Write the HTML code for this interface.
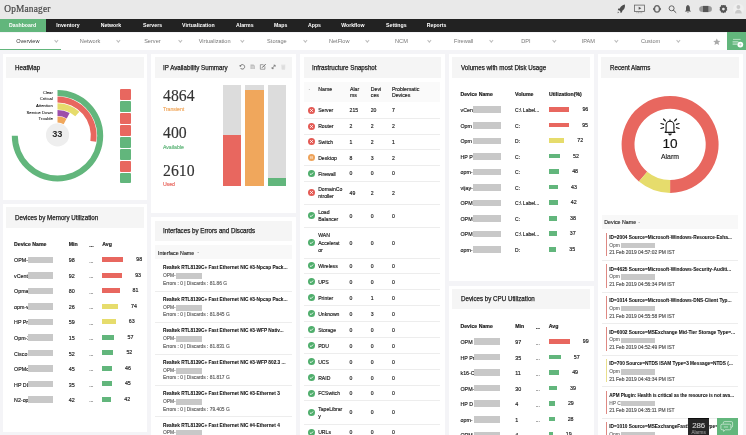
<!DOCTYPE html><html><head><meta charset="utf-8"><style>
*{margin:0;padding:0;box-sizing:border-box}
html,body{-webkit-font-smoothing:antialiased;width:746px;height:435px;overflow:hidden;background:#f4f4f7;font-family:"Liberation Sans",sans-serif;color:#222}
.a{position:absolute;white-space:nowrap}
#top{position:absolute;left:0;top:0;width:746px;height:18.7px;background:#e9e9e9}
#nav{position:absolute;left:0;top:18.7px;width:746px;height:13.8px;background:#222}
#sub{position:absolute;left:0;top:32.5px;width:746px;height:17.8px;background:#fff}
.nv{position:absolute;top:18.7px;height:13.8px;line-height:13.8px;color:#fff;font-weight:bold;font-size:5.2px}
.sn{position:absolute;top:32.5px;height:17px;line-height:17px;color:#777;font-size:5.6px;text-align:center;width:62.27px}
.chev{position:absolute;top:38.9px;width:2.7px;height:2.7px;border-right:0.6px solid #bdbdbd;border-bottom:0.6px solid #bdbdbd;transform:rotate(45deg)}
.p{position:absolute;background:#fff;width:144.8px;overflow:hidden}
.hb{position:absolute;left:3.5px;right:3.5px;top:3.6px;height:20.4px;background:#f5f5f5}
.ht{position:absolute;left:8.5px;top:0.4px;line-height:20.3px;font-size:6.5px;font-weight:normal;-webkit-text-stroke:0.25px #222;color:#222;white-space:nowrap;transform:scaleX(0.955);transform-origin:0 50%}
.t{position:absolute;white-space:nowrap;line-height:8px;height:8px;-webkit-text-stroke:0.16px currentColor}
.gb{position:absolute;background:#c8c8c8}
</style></head><body><div id="root" style="position:absolute;left:0;top:0;width:746px;height:435px;overflow:hidden;will-change:transform">
<div id="top"></div>
<div class="a" style="left:4.3px;top:2.6px;font-family:'Liberation Serif',serif;font-size:9.3px;letter-spacing:0.2px;color:#4a4a4a;line-height:12px;-webkit-text-stroke:0.22px #4a4a4a">OpManager</div>
<div id="nav"></div>
<div class="a" style="left:0;top:18.7px;width:46.3px;height:13.8px;background:#62b67c"></div>
<div class="nv" style="left:9px">Dashboard</div>
<div class="nv" style="left:56.3px">Inventory</div>
<div class="nv" style="left:100.7px">Network</div>
<div class="nv" style="left:143px">Servers</div>
<div class="nv" style="left:182.1px">Virtualization</div>
<div class="nv" style="left:236px">Alarms</div>
<div class="nv" style="left:274px">Maps</div>
<div class="nv" style="left:308px">Apps</div>
<div class="nv" style="left:341.2px">Workflow</div>
<div class="nv" style="left:386.1px">Settings</div>
<div class="nv" style="left:426.8px">Reports</div>
<div id="sub"></div>
<div class="a" style="left:0;top:48.8px;width:60.6px;height:1.3px;background:#62b67c"></div>
<div class="sn" style="left:-3.30px;color:#333;">Overview</div>
<div class="chev" style="left:54.60px"></div>
<div class="sn" style="left:58.97px;">Network</div>
<div class="chev" style="left:116.87px"></div>
<div class="sn" style="left:121.24px;">Server</div>
<div class="chev" style="left:179.14px"></div>
<div class="sn" style="left:183.51px;">Virtualization</div>
<div class="chev" style="left:241.41px"></div>
<div class="sn" style="left:245.78px;">Storage</div>
<div class="chev" style="left:303.68px"></div>
<div class="sn" style="left:308.05px;">NetFlow</div>
<div class="chev" style="left:365.95px"></div>
<div class="sn" style="left:370.32px;">NCM</div>
<div class="chev" style="left:428.22px"></div>
<div class="sn" style="left:432.59px;">Firewall</div>
<div class="chev" style="left:490.49px"></div>
<div class="sn" style="left:494.86px;">DPI</div>
<div class="chev" style="left:552.76px"></div>
<div class="sn" style="left:557.13px;">IPAM</div>
<div class="chev" style="left:615.03px"></div>
<div class="sn" style="left:619.40px;">Custom</div>
<div class="chev" style="left:677.30px"></div>
<div class="a" style="left:726.9px;top:32px;width:19.1px;height:17.9px;background:#62b67c"></div>
<svg class="a" style="left:600px;top:0" width="146" height="18" viewBox="600 0 146 18"><path d="M624.9,4.6C622.3,5.0 620.6,6.6 619.8,8.4L618.3,8.6L617.8,10.2L619.2,10.3L620.4,11.4L620.5,12.9L622.0,12.3L622.3,10.8C624.0,10.0 625.4,8.0 624.9,4.6Z" fill="#4d4d4d"/><path d="M617.9,11.6L619.0,12.6L617.6,13.2Z" fill="#4d4d4d"/><rect x="634.5" y="5.1" width="9.9" height="6.4" fill="none" stroke="#666" stroke-width="0.8"/><path d="M638.7,6.8L641.3,8.3L638.7,9.8Z" fill="#555"/><path d="M636.4,12.7H642.6" stroke="#777" stroke-width="0.6" stroke-dasharray="1,0.6"/><ellipse cx="657" cy="8.9" rx="2.5" ry="3.2" fill="none" stroke="#666" stroke-width="1.3"/><rect x="653.1" y="7.7" width="1.5" height="2.6" rx="0.6" fill="#666"/><rect x="659.4" y="7.7" width="1.5" height="2.6" rx="0.6" fill="#666"/><circle cx="671.6" cy="8.3" r="2.5" fill="none" stroke="#555" stroke-width="0.9"/><path d="M673.4,10.2L675.9,12.5" stroke="#555" stroke-width="1.0" stroke-linecap="round"/><path d="M687.9,5.0C686.4,5.3 686.0,6.8 686.0,8.2V10.3L684.8,11.5H691.1L689.9,10.3V8.2C689.9,6.8 689.4,5.3 687.9,5.0Z" fill="#555"/><path d="M687.1,11.9A0.9,0.9 0 0 0 688.8,11.9Z" fill="#555"/><path d="M699.2,8.9C699.2,7.2 700.0,6.2 702.9,6.0V12.0C700.0,11.8 699.2,10.8 699.2,8.9Z" fill="#999"/><path d="M711.9,8.9C711.9,7.2 711.1,6.2 708.6,6.0V12.0C711.1,11.8 711.9,10.8 711.9,8.9Z" fill="#999"/><rect x="702.9" y="5.9" width="5.7" height="6.2" fill="#555"/><path d="M723.4,4.9L724.3,5.3L725.6,5.0L726.0,6.5L727.2,7.4L726.8,8.9L727.4,10.0L726.1,10.9L725.8,12.5L724.3,12.5L723.4,13.3L722.5,12.5L721.0,12.5L720.7,10.9L719.4,10.0L720.0,8.9L719.6,7.4L720.8,6.5L721.2,5.0L722.5,5.3Z" fill="#555"/><circle cx="723.4" cy="9.1" r="1.4" fill="#e9e9e9"/><circle cx="738.4" cy="9.0" r="5.4" fill="#efefef"/><circle cx="738.4" cy="7.0" r="1.9" fill="#c9c9c9"/><path d="M735.0,13.4C735.0,10.9 736.6,9.7 738.4,9.7C740.2,9.7 741.8,10.9 741.8,13.4Z" fill="#c9c9c9"/></svg>
<div class="p" style="left:2.5px;top:53.6px;height:146.1px"><div class="hb"><div class="ht">HeatMap</div></div><svg class="a" style="left:0;top:0" width="145" height="146" viewBox="0 0 145 146"><path d="M54.50,36.00A45.7,45.7 0 1 1 8.80,81.70L14.80,81.70A39.7,39.7 0 1 0 54.50,42.00Z" fill="#62b67c"/><path d="M54.50,42.60A39.1,39.1 0 0 1 93.12,87.82L87.39,86.91A33.3,33.3 0 0 0 54.50,48.40Z" fill="#e8675f"/><path d="M54.50,49.30A32.4,32.4 0 0 1 76.39,57.81L72.27,62.31A26.3,26.3 0 0 0 54.50,55.40Z" fill="#e6dc6c"/><path d="M54.50,56.00A25.7,25.7 0 0 1 66.64,59.05L63.76,64.43A19.6,19.6 0 0 0 54.50,62.10Z" fill="#9c4eaa"/><path d="M54.50,62.60A19.1,19.1 0 0 1 63.53,64.87L60.69,70.15A13.1,13.1 0 0 0 54.50,68.60Z" fill="#f0a75c"/><circle cx="54.55" cy="80.90" r="11.6" fill="#eeeeee"/></svg><div class="t" style="right:94.40px;top:35.00px;font-size:4.3px;color:#000;-webkit-text-stroke:0.04px #000">Clear</div><div class="t" style="right:94.40px;top:41.80px;font-size:4.3px;color:#000;-webkit-text-stroke:0.04px #000">Critical</div><div class="t" style="right:94.40px;top:48.50px;font-size:4.3px;color:#000;-webkit-text-stroke:0.04px #000">Attention</div><div class="t" style="right:94.40px;top:55.10px;font-size:4.3px;color:#000;-webkit-text-stroke:0.04px #000">Service Down</div><div class="t" style="right:94.40px;top:61.80px;font-size:4.3px;color:#000;-webkit-text-stroke:0.04px #000">Trouble</div><div class="t" style="left:44.80px;width:20px;text-align:center;top:75.50px;line-height:10px;height:10px;font-size:9.2px;font-weight:bold;color:#2a2a2a;-webkit-text-stroke:0">33</div><div class="a" style="left:117.20px;top:35.50px;width:11.40px;height:10.80px;background:#e8675f;border-radius:1px"></div><div class="a" style="left:117.20px;top:47.55px;width:11.40px;height:10.80px;background:#62b67c;border-radius:1px"></div><div class="a" style="left:117.20px;top:59.60px;width:11.40px;height:10.80px;background:#e8675f;border-radius:1px"></div><div class="a" style="left:117.20px;top:71.65px;width:11.40px;height:10.80px;background:#e8675f;border-radius:1px"></div><div class="a" style="left:117.20px;top:83.70px;width:11.40px;height:10.80px;background:#62b67c;border-radius:1px"></div><div class="a" style="left:117.20px;top:95.75px;width:11.40px;height:10.80px;background:#62b67c;border-radius:1px"></div><div class="a" style="left:117.20px;top:107.80px;width:11.40px;height:10.80px;background:#e8675f;border-radius:1px"></div><div class="a" style="left:117.20px;top:119.85px;width:11.40px;height:9.30px;background:#62b67c;border-radius:1px"></div></div>
<div class="p" style="left:2.5px;top:203.7px;height:228.2px"><div class="hb"><div class="ht">Devices by Memory Utilization</div></div><div class="t" style="left:11.60px;top:36.80px;line-height:8px;height:8px;font-size:5.2px;color:#222;font-weight:bold;-webkit-text-stroke:0.18px currentColor;">Device Name</div><div class="t" style="left:66.30px;top:36.80px;line-height:8px;height:8px;font-size:5.2px;color:#222;font-weight:bold;-webkit-text-stroke:0.18px currentColor;">Min</div><div class="t" style="left:86.80px;top:37.80px;line-height:8px;height:8px;font-size:5.2px;color:#222;font-weight:bold;-webkit-text-stroke:0.18px currentColor;">...</div><div class="t" style="left:99.80px;top:36.80px;line-height:8px;height:8px;font-size:5.2px;color:#222;font-weight:bold;-webkit-text-stroke:0.18px currentColor;">Avg</div><div class="t" style="left:11.60px;top:52.70px;line-height:8px;height:8px;font-size:5.3px;color:#222;font-weight:normal;">OPM-</div><div class="a" style="left:25.50px;top:52.90px;width:25.30px;height:6.50px;background:#c8c8c8;"></div><div class="t" style="left:66.30px;top:52.70px;line-height:8px;height:8px;font-size:5.4px;color:#222;font-weight:normal;">98</div><div class="t" style="left:86.80px;top:53.10px;line-height:8px;height:8px;font-size:5.0px;color:#555;font-weight:normal;">...</div><div class="a" style="left:99.80px;top:53.50px;width:20.92px;height:4.80px;background:#e8675f;"></div><div class="t" style="left:133.72px;top:51.50px;line-height:8px;height:8px;font-size:5.3px;color:#222;font-weight:normal;">98</div><div class="t" style="left:11.60px;top:68.22px;line-height:8px;height:8px;font-size:5.3px;color:#222;font-weight:normal;">vCent</div><div class="a" style="left:25.50px;top:68.42px;width:25.30px;height:6.50px;background:#c8c8c8;"></div><div class="t" style="left:66.30px;top:68.22px;line-height:8px;height:8px;font-size:5.4px;color:#222;font-weight:normal;">92</div><div class="t" style="left:86.80px;top:68.62px;line-height:8px;height:8px;font-size:5.0px;color:#555;font-weight:normal;">...</div><div class="a" style="left:99.80px;top:69.02px;width:19.86px;height:4.80px;background:#e8675f;"></div><div class="t" style="left:132.66px;top:67.02px;line-height:8px;height:8px;font-size:5.3px;color:#222;font-weight:normal;">93</div><div class="t" style="left:11.60px;top:83.74px;line-height:8px;height:8px;font-size:5.3px;color:#222;font-weight:normal;">Opma</div><div class="a" style="left:25.50px;top:83.94px;width:25.30px;height:6.50px;background:#c8c8c8;"></div><div class="t" style="left:66.30px;top:83.74px;line-height:8px;height:8px;font-size:5.4px;color:#222;font-weight:normal;">80</div><div class="t" style="left:86.80px;top:84.14px;line-height:8px;height:8px;font-size:5.0px;color:#555;font-weight:normal;">...</div><div class="a" style="left:99.80px;top:84.54px;width:17.29px;height:4.80px;background:#e8675f;"></div><div class="t" style="left:130.09px;top:82.54px;line-height:8px;height:8px;font-size:5.3px;color:#222;font-weight:normal;">81</div><div class="t" style="left:11.60px;top:99.26px;line-height:8px;height:8px;font-size:5.3px;color:#222;font-weight:normal;">opm-w</div><div class="a" style="left:25.50px;top:99.46px;width:25.30px;height:6.50px;background:#c8c8c8;"></div><div class="t" style="left:66.30px;top:99.26px;line-height:8px;height:8px;font-size:5.4px;color:#222;font-weight:normal;">26</div><div class="t" style="left:86.80px;top:99.66px;line-height:8px;height:8px;font-size:5.0px;color:#555;font-weight:normal;">...</div><div class="a" style="left:99.80px;top:100.06px;width:15.80px;height:4.80px;background:#e6dc6c;"></div><div class="t" style="left:128.60px;top:98.06px;line-height:8px;height:8px;font-size:5.3px;color:#222;font-weight:normal;">74</div><div class="t" style="left:11.60px;top:114.78px;line-height:8px;height:8px;font-size:5.3px;color:#222;font-weight:normal;">HP Pr</div><div class="a" style="left:25.50px;top:114.98px;width:25.30px;height:6.50px;background:#c8c8c8;"></div><div class="t" style="left:66.30px;top:114.78px;line-height:8px;height:8px;font-size:5.4px;color:#222;font-weight:normal;">59</div><div class="t" style="left:86.80px;top:115.18px;line-height:8px;height:8px;font-size:5.0px;color:#555;font-weight:normal;">...</div><div class="a" style="left:99.80px;top:115.58px;width:13.45px;height:4.80px;background:#e6dc6c;"></div><div class="t" style="left:126.25px;top:113.58px;line-height:8px;height:8px;font-size:5.3px;color:#222;font-weight:normal;">63</div><div class="t" style="left:11.60px;top:130.30px;line-height:8px;height:8px;font-size:5.3px;color:#222;font-weight:normal;">Opm-2</div><div class="a" style="left:25.50px;top:130.50px;width:25.30px;height:6.50px;background:#c8c8c8;"></div><div class="t" style="left:66.30px;top:130.30px;line-height:8px;height:8px;font-size:5.4px;color:#222;font-weight:normal;">15</div><div class="t" style="left:86.80px;top:130.70px;line-height:8px;height:8px;font-size:5.0px;color:#555;font-weight:normal;">...</div><div class="a" style="left:99.80px;top:131.10px;width:12.17px;height:4.80px;background:#62b67c;"></div><div class="t" style="left:124.97px;top:129.10px;line-height:8px;height:8px;font-size:5.3px;color:#222;font-weight:normal;">57</div><div class="t" style="left:11.60px;top:145.82px;line-height:8px;height:8px;font-size:5.3px;color:#222;font-weight:normal;">Cisco</div><div class="a" style="left:25.50px;top:146.02px;width:25.30px;height:6.50px;background:#c8c8c8;"></div><div class="t" style="left:66.30px;top:145.82px;line-height:8px;height:8px;font-size:5.4px;color:#222;font-weight:normal;">52</div><div class="t" style="left:86.80px;top:146.22px;line-height:8px;height:8px;font-size:5.0px;color:#555;font-weight:normal;">...</div><div class="a" style="left:99.80px;top:146.62px;width:11.10px;height:4.80px;background:#62b67c;"></div><div class="t" style="left:123.90px;top:144.62px;line-height:8px;height:8px;font-size:5.3px;color:#222;font-weight:normal;">52</div><div class="t" style="left:11.60px;top:161.34px;line-height:8px;height:8px;font-size:5.3px;color:#222;font-weight:normal;">OPMc</div><div class="a" style="left:25.50px;top:161.54px;width:25.30px;height:6.50px;background:#c8c8c8;"></div><div class="t" style="left:66.30px;top:161.34px;line-height:8px;height:8px;font-size:5.4px;color:#222;font-weight:normal;">45</div><div class="t" style="left:86.80px;top:161.74px;line-height:8px;height:8px;font-size:5.0px;color:#555;font-weight:normal;">...</div><div class="a" style="left:99.80px;top:162.14px;width:9.82px;height:4.80px;background:#62b67c;"></div><div class="t" style="left:122.62px;top:160.14px;line-height:8px;height:8px;font-size:5.3px;color:#222;font-weight:normal;">46</div><div class="t" style="left:11.60px;top:176.86px;line-height:8px;height:8px;font-size:5.3px;color:#222;font-weight:normal;">HP DL</div><div class="a" style="left:25.50px;top:177.06px;width:25.30px;height:6.50px;background:#c8c8c8;"></div><div class="t" style="left:66.30px;top:176.86px;line-height:8px;height:8px;font-size:5.4px;color:#222;font-weight:normal;">35</div><div class="t" style="left:86.80px;top:177.26px;line-height:8px;height:8px;font-size:5.0px;color:#555;font-weight:normal;">...</div><div class="a" style="left:99.80px;top:177.66px;width:9.61px;height:4.80px;background:#62b67c;"></div><div class="t" style="left:122.41px;top:175.66px;line-height:8px;height:8px;font-size:5.3px;color:#222;font-weight:normal;">45</div><div class="t" style="left:11.60px;top:192.38px;line-height:8px;height:8px;font-size:5.3px;color:#222;font-weight:normal;">N2-op</div><div class="a" style="left:25.50px;top:192.58px;width:25.30px;height:6.50px;background:#c8c8c8;"></div><div class="t" style="left:66.30px;top:192.38px;line-height:8px;height:8px;font-size:5.4px;color:#222;font-weight:normal;">42</div><div class="t" style="left:86.80px;top:192.78px;line-height:8px;height:8px;font-size:5.0px;color:#555;font-weight:normal;">...</div><div class="a" style="left:99.80px;top:193.18px;width:8.97px;height:4.80px;background:#62b67c;"></div><div class="t" style="left:121.77px;top:191.18px;line-height:8px;height:8px;font-size:5.3px;color:#222;font-weight:normal;">42</div></div>
<div class="p" style="left:448.9px;top:53.6px;height:227.8px"><div class="hb"><div class="ht">Volumes with most Disk Usage</div></div><div class="t" style="left:11.60px;top:36.80px;line-height:8px;height:8px;font-size:5.2px;color:#222;font-weight:bold;-webkit-text-stroke:0.18px currentColor;">Device Name</div><div class="t" style="left:66.20px;top:36.80px;line-height:8px;height:8px;font-size:5.2px;color:#222;font-weight:bold;-webkit-text-stroke:0.18px currentColor;">Volume</div><div class="t" style="left:100.00px;top:36.80px;line-height:8px;height:8px;font-size:5.2px;color:#222;font-weight:bold;-webkit-text-stroke:0.18px currentColor;">Utilization(%)</div><div class="t" style="left:11.60px;top:52.70px;line-height:8px;height:8px;font-size:5.3px;color:#222;font-weight:normal;">vCen</div><div class="a" style="left:24.00px;top:52.90px;width:28.00px;height:6.50px;background:#c8c8c8;"></div><div class="t" style="left:66.20px;top:52.70px;line-height:8px;height:8px;font-size:5.0px;color:#222;font-weight:normal;">C:\ Label...</div><div class="a" style="left:100.00px;top:53.50px;width:20.50px;height:4.80px;background:#e8675f;"></div><div class="t" style="left:133.50px;top:51.50px;line-height:8px;height:8px;font-size:5.3px;color:#222;font-weight:normal;">96</div><div class="t" style="left:11.60px;top:68.22px;line-height:8px;height:8px;font-size:5.3px;color:#222;font-weight:normal;">Opm</div><div class="a" style="left:24.00px;top:68.42px;width:28.00px;height:6.50px;background:#c8c8c8;"></div><div class="t" style="left:66.20px;top:68.22px;line-height:8px;height:8px;font-size:5.0px;color:#222;font-weight:normal;">C:</div><div class="a" style="left:100.00px;top:69.02px;width:20.28px;height:4.80px;background:#e8675f;"></div><div class="t" style="left:133.28px;top:67.02px;line-height:8px;height:8px;font-size:5.3px;color:#222;font-weight:normal;">95</div><div class="t" style="left:11.60px;top:83.74px;line-height:8px;height:8px;font-size:5.3px;color:#222;font-weight:normal;">Opm</div><div class="a" style="left:24.00px;top:83.94px;width:28.00px;height:6.50px;background:#c8c8c8;"></div><div class="t" style="left:66.20px;top:83.74px;line-height:8px;height:8px;font-size:5.0px;color:#222;font-weight:normal;">D:</div><div class="a" style="left:100.00px;top:84.54px;width:15.37px;height:4.80px;background:#e6dc6c;"></div><div class="t" style="left:128.37px;top:82.54px;line-height:8px;height:8px;font-size:5.3px;color:#222;font-weight:normal;">72</div><div class="t" style="left:11.60px;top:99.26px;line-height:8px;height:8px;font-size:5.3px;color:#222;font-weight:normal;">HP P</div><div class="a" style="left:24.00px;top:99.46px;width:28.00px;height:6.50px;background:#c8c8c8;"></div><div class="t" style="left:66.20px;top:99.26px;line-height:8px;height:8px;font-size:5.0px;color:#222;font-weight:normal;">C:</div><div class="a" style="left:100.00px;top:100.06px;width:11.10px;height:4.80px;background:#62b67c;"></div><div class="t" style="left:124.10px;top:98.06px;line-height:8px;height:8px;font-size:5.3px;color:#222;font-weight:normal;">52</div><div class="t" style="left:11.60px;top:114.78px;line-height:8px;height:8px;font-size:5.3px;color:#222;font-weight:normal;">opm-</div><div class="a" style="left:24.00px;top:114.98px;width:28.00px;height:6.50px;background:#c8c8c8;"></div><div class="t" style="left:66.20px;top:114.78px;line-height:8px;height:8px;font-size:5.0px;color:#222;font-weight:normal;">C:</div><div class="a" style="left:100.00px;top:115.58px;width:10.25px;height:4.80px;background:#62b67c;"></div><div class="t" style="left:123.25px;top:113.58px;line-height:8px;height:8px;font-size:5.3px;color:#222;font-weight:normal;">48</div><div class="t" style="left:11.60px;top:130.30px;line-height:8px;height:8px;font-size:5.3px;color:#222;font-weight:normal;">vijay-</div><div class="a" style="left:24.00px;top:130.50px;width:28.00px;height:6.50px;background:#c8c8c8;"></div><div class="t" style="left:66.20px;top:130.30px;line-height:8px;height:8px;font-size:5.0px;color:#222;font-weight:normal;">C:</div><div class="a" style="left:100.00px;top:131.10px;width:9.18px;height:4.80px;background:#62b67c;"></div><div class="t" style="left:122.18px;top:129.10px;line-height:8px;height:8px;font-size:5.3px;color:#222;font-weight:normal;">43</div><div class="t" style="left:11.60px;top:145.82px;line-height:8px;height:8px;font-size:5.3px;color:#222;font-weight:normal;">OPM</div><div class="a" style="left:24.00px;top:146.02px;width:28.00px;height:6.50px;background:#c8c8c8;"></div><div class="t" style="left:66.20px;top:145.82px;line-height:8px;height:8px;font-size:5.0px;color:#222;font-weight:normal;">C:\ Label...</div><div class="a" style="left:100.00px;top:146.62px;width:8.97px;height:4.80px;background:#62b67c;"></div><div class="t" style="left:121.97px;top:144.62px;line-height:8px;height:8px;font-size:5.3px;color:#222;font-weight:normal;">42</div><div class="t" style="left:11.60px;top:161.34px;line-height:8px;height:8px;font-size:5.3px;color:#222;font-weight:normal;">OPM</div><div class="a" style="left:24.00px;top:161.54px;width:28.00px;height:6.50px;background:#c8c8c8;"></div><div class="t" style="left:66.20px;top:161.34px;line-height:8px;height:8px;font-size:5.0px;color:#222;font-weight:normal;">C:</div><div class="a" style="left:100.00px;top:162.14px;width:8.11px;height:4.80px;background:#62b67c;"></div><div class="t" style="left:121.11px;top:160.14px;line-height:8px;height:8px;font-size:5.3px;color:#222;font-weight:normal;">38</div><div class="t" style="left:11.60px;top:176.86px;line-height:8px;height:8px;font-size:5.3px;color:#222;font-weight:normal;">OPM</div><div class="a" style="left:24.00px;top:177.06px;width:28.00px;height:6.50px;background:#c8c8c8;"></div><div class="t" style="left:66.20px;top:176.86px;line-height:8px;height:8px;font-size:5.0px;color:#222;font-weight:normal;">C:\ Label...</div><div class="a" style="left:100.00px;top:177.66px;width:7.90px;height:4.80px;background:#62b67c;"></div><div class="t" style="left:120.90px;top:175.66px;line-height:8px;height:8px;font-size:5.3px;color:#222;font-weight:normal;">37</div><div class="t" style="left:11.60px;top:192.38px;line-height:8px;height:8px;font-size:5.3px;color:#222;font-weight:normal;">opm-</div><div class="a" style="left:24.00px;top:192.58px;width:28.00px;height:6.50px;background:#c8c8c8;"></div><div class="t" style="left:66.20px;top:192.38px;line-height:8px;height:8px;font-size:5.0px;color:#222;font-weight:normal;">D:</div><div class="a" style="left:100.00px;top:193.18px;width:7.47px;height:4.80px;background:#62b67c;"></div><div class="t" style="left:120.47px;top:191.18px;line-height:8px;height:8px;font-size:5.3px;color:#222;font-weight:normal;">35</div></div>
<div class="p" style="left:448.9px;top:285.5px;height:220px"><div class="hb"><div class="ht">Devices by CPU Utilization</div></div><div class="t" style="left:11.60px;top:36.80px;line-height:8px;height:8px;font-size:5.2px;color:#222;font-weight:bold;-webkit-text-stroke:0.18px currentColor;">Device Name</div><div class="t" style="left:66.30px;top:36.80px;line-height:8px;height:8px;font-size:5.2px;color:#222;font-weight:bold;-webkit-text-stroke:0.18px currentColor;">Min</div><div class="t" style="left:86.80px;top:37.80px;line-height:8px;height:8px;font-size:5.2px;color:#222;font-weight:bold;-webkit-text-stroke:0.18px currentColor;">...</div><div class="t" style="left:99.80px;top:36.80px;line-height:8px;height:8px;font-size:5.2px;color:#222;font-weight:bold;-webkit-text-stroke:0.18px currentColor;">Avg</div><div class="t" style="left:11.60px;top:52.70px;line-height:8px;height:8px;font-size:5.3px;color:#222;font-weight:normal;">OPM</div><div class="a" style="left:25.50px;top:52.90px;width:25.30px;height:6.50px;background:#c8c8c8;"></div><div class="t" style="left:66.30px;top:52.70px;line-height:8px;height:8px;font-size:5.4px;color:#222;font-weight:normal;">97</div><div class="t" style="left:86.80px;top:53.10px;line-height:8px;height:8px;font-size:5.0px;color:#555;font-weight:normal;">...</div><div class="a" style="left:99.80px;top:53.50px;width:21.14px;height:4.80px;background:#e8675f;"></div><div class="t" style="left:133.94px;top:51.50px;line-height:8px;height:8px;font-size:5.3px;color:#222;font-weight:normal;">99</div><div class="t" style="left:11.60px;top:68.22px;line-height:8px;height:8px;font-size:5.3px;color:#222;font-weight:normal;">HP Pr</div><div class="a" style="left:25.50px;top:68.42px;width:25.30px;height:6.50px;background:#c8c8c8;"></div><div class="t" style="left:66.30px;top:68.22px;line-height:8px;height:8px;font-size:5.4px;color:#222;font-weight:normal;">35</div><div class="t" style="left:86.80px;top:68.62px;line-height:8px;height:8px;font-size:5.0px;color:#555;font-weight:normal;">...</div><div class="a" style="left:99.80px;top:69.02px;width:12.17px;height:4.80px;background:#62b67c;"></div><div class="t" style="left:124.97px;top:67.02px;line-height:8px;height:8px;font-size:5.3px;color:#222;font-weight:normal;">57</div><div class="t" style="left:11.60px;top:83.74px;line-height:8px;height:8px;font-size:5.3px;color:#222;font-weight:normal;">k16-C</div><div class="a" style="left:25.50px;top:83.94px;width:25.30px;height:6.50px;background:#c8c8c8;"></div><div class="t" style="left:66.30px;top:83.74px;line-height:8px;height:8px;font-size:5.4px;color:#222;font-weight:normal;">11</div><div class="t" style="left:86.80px;top:84.14px;line-height:8px;height:8px;font-size:5.0px;color:#555;font-weight:normal;">...</div><div class="a" style="left:99.80px;top:84.54px;width:10.46px;height:4.80px;background:#62b67c;"></div><div class="t" style="left:123.26px;top:82.54px;line-height:8px;height:8px;font-size:5.3px;color:#222;font-weight:normal;">49</div><div class="t" style="left:11.60px;top:99.26px;line-height:8px;height:8px;font-size:5.3px;color:#222;font-weight:normal;">OPM-</div><div class="a" style="left:25.50px;top:99.46px;width:25.30px;height:6.50px;background:#c8c8c8;"></div><div class="t" style="left:66.30px;top:99.26px;line-height:8px;height:8px;font-size:5.4px;color:#222;font-weight:normal;">30</div><div class="t" style="left:86.80px;top:99.66px;line-height:8px;height:8px;font-size:5.0px;color:#555;font-weight:normal;">...</div><div class="a" style="left:99.80px;top:100.06px;width:8.33px;height:4.80px;background:#62b67c;"></div><div class="t" style="left:121.13px;top:98.06px;line-height:8px;height:8px;font-size:5.3px;color:#222;font-weight:normal;">39</div><div class="t" style="left:11.60px;top:114.78px;line-height:8px;height:8px;font-size:5.3px;color:#222;font-weight:normal;">HP D</div><div class="a" style="left:25.50px;top:114.98px;width:25.30px;height:6.50px;background:#c8c8c8;"></div><div class="t" style="left:66.30px;top:114.78px;line-height:8px;height:8px;font-size:5.4px;color:#222;font-weight:normal;">4</div><div class="t" style="left:86.80px;top:115.18px;line-height:8px;height:8px;font-size:5.0px;color:#555;font-weight:normal;">...</div><div class="a" style="left:99.80px;top:115.58px;width:6.19px;height:4.80px;background:#62b67c;"></div><div class="t" style="left:118.99px;top:113.58px;line-height:8px;height:8px;font-size:5.3px;color:#222;font-weight:normal;">29</div><div class="t" style="left:11.60px;top:130.30px;line-height:8px;height:8px;font-size:5.3px;color:#222;font-weight:normal;">opm-</div><div class="a" style="left:25.50px;top:130.50px;width:25.30px;height:6.50px;background:#c8c8c8;"></div><div class="t" style="left:66.30px;top:130.30px;line-height:8px;height:8px;font-size:5.4px;color:#222;font-weight:normal;">1</div><div class="t" style="left:86.80px;top:130.70px;line-height:8px;height:8px;font-size:5.0px;color:#555;font-weight:normal;">...</div><div class="a" style="left:99.80px;top:131.10px;width:5.98px;height:4.80px;background:#62b67c;"></div><div class="t" style="left:118.78px;top:129.10px;line-height:8px;height:8px;font-size:5.3px;color:#222;font-weight:normal;">28</div><div class="t" style="left:11.60px;top:145.82px;line-height:8px;height:8px;font-size:5.3px;color:#222;font-weight:normal;">OPM</div><div class="a" style="left:25.50px;top:146.02px;width:25.30px;height:6.50px;background:#c8c8c8;"></div><div class="t" style="left:66.30px;top:145.82px;line-height:8px;height:8px;font-size:5.4px;color:#222;font-weight:normal;">4</div><div class="t" style="left:86.80px;top:146.22px;line-height:8px;height:8px;font-size:5.0px;color:#555;font-weight:normal;">...</div><div class="a" style="left:99.80px;top:146.62px;width:4.06px;height:4.80px;background:#62b67c;"></div><div class="t" style="left:116.86px;top:144.62px;line-height:8px;height:8px;font-size:5.3px;color:#222;font-weight:normal;">19</div></div>
<div class="p" style="left:151.2px;top:53.6px;height:159.9px"><div class="hb"><div class="ht">IP Availability Summary</div><svg class="a" style="left:0;top:0" width="138" height="20" viewBox="154.7 57.2 138 20.3"><path d="M240.2,66.4A2.3,2.3 0 1 1 240.4,68.4" fill="none" stroke="#666" stroke-width="0.85"/><path d="M239.3,65.3L240.0,67.3L241.6,66.0Z" fill="#666"/><path d="M250.6,64.7H253.6L255,66.1V69.5H250.6Z" fill="#bbb"/><path d="M251.4,66.6H254.2M251.4,67.6H254.2M251.4,68.6H254.2" stroke="#fff" stroke-width="0.35"/><path d="M263.8,65.0H260.6V69.6H265.2V66.6" fill="none" stroke="#777" stroke-width="0.7"/><path d="M262.4,68.0L265.9,64.5" stroke="#555" stroke-width="1"/><path d="M272.6,68.9L275.4,65.6M274.0,65.5H275.6V67.1M272.5,67.4V69.0H274.1" fill="none" stroke="#666" stroke-width="0.75"/><path d="M281.7,65.3H286.1M282.2,65.8H285.6L285.3,69.8H282.5Z" fill="#ddd" stroke="#ddd" stroke-width="0.5"/></svg></div><div class="t" style="left:11.70px;top:34.90px;line-height:16px;height:16px;font-family:Liberation Serif,serif;font-size:16.6px;color:#333;-webkit-text-stroke:0.15px #333;transform:scaleX(0.95);transform-origin:0 50%">4864</div><div class="t" style="left:11.70px;top:51.50px;line-height:8px;height:8px;font-size:5.2px;color:#f0a75c;font-weight:normal;">Transient</div><div class="t" style="left:11.70px;top:71.90px;line-height:16px;height:16px;font-family:Liberation Serif,serif;font-size:16.6px;color:#333;-webkit-text-stroke:0.15px #333;transform:scaleX(0.95);transform-origin:0 50%">400</div><div class="t" style="left:11.70px;top:89.10px;line-height:8px;height:8px;font-size:5.2px;color:#62b67c;font-weight:normal;">Available</div><div class="t" style="left:11.70px;top:109.80px;line-height:16px;height:16px;font-family:Liberation Serif,serif;font-size:16.6px;color:#333;-webkit-text-stroke:0.15px #333;transform:scaleX(0.95);transform-origin:0 50%">2610</div><div class="t" style="left:11.70px;top:126.10px;line-height:8px;height:8px;font-size:5.2px;color:#e8675f;font-weight:normal;">Used</div><div class="a" style="left:71.70px;top:31.20px;width:18.50px;height:101.50px;background:#dcdcdc;"></div><div class="a" style="left:71.70px;top:81.20px;width:18.50px;height:51.50px;background:#e8675f;"></div><div class="a" style="left:94.20px;top:31.20px;width:18.50px;height:101.50px;background:#dcdcdc;"></div><div class="a" style="left:94.20px;top:36.20px;width:18.50px;height:96.50px;background:#f0a75c;"></div><div class="a" style="left:116.70px;top:31.20px;width:18.50px;height:101.50px;background:#dcdcdc;"></div><div class="a" style="left:116.70px;top:124.80px;width:18.50px;height:7.90px;background:#62b67c;"></div></div>
<div class="p" style="left:151.2px;top:217.3px;height:220px"><div class="hb"><div class="ht">Interfaces by Errors and Discards</div></div><div class="a" style="left:3.80px;top:27.70px;width:136.80px;height:14.50px;background:#f8f8f8;"></div><div class="t" style="left:6.80px;top:31.50px;line-height:8px;height:8px;font-size:5.3px;color:#1a1a1a;font-weight:normal;-webkit-text-stroke:0.12px #1a1a1a">Interface Name</div><div class="t" style="left:46.30px;top:31.20px;line-height:8px;height:8px;font-size:4px;color:#999;font-weight:normal;">-</div><div class="t" style="left:11.80px;top:47.10px;line-height:8px;height:8px;font-size:4.75px;color:#111;font-weight:bold;-webkit-text-stroke:0.06px currentColor;">Realtek RTL8139C+ Fast Ethernet NIC #3-Npcap Pack...</div><div class="t" style="left:11.80px;top:54.90px;line-height:8px;height:8px;font-size:4.9px;color:#666;font-weight:normal;">OPM-</div><div class="a" style="left:25.00px;top:55.90px;width:26.20px;height:6.00px;background:#c8c8c8;"></div><div class="t" style="left:11.80px;top:62.70px;line-height:8px;height:8px;font-size:4.85px;color:#666;font-weight:normal;">Errors : 0 | Discards : 81.86 G</div><div class="a" style="left:4.30px;top:73.40px;width:136.50px;height:0.60px;background:#ededed;"></div><div class="t" style="left:11.80px;top:78.54px;line-height:8px;height:8px;font-size:4.75px;color:#111;font-weight:bold;-webkit-text-stroke:0.06px currentColor;">Realtek RTL8139C+ Fast Ethernet NIC #3-Npcap Pack...</div><div class="t" style="left:11.80px;top:86.34px;line-height:8px;height:8px;font-size:4.9px;color:#666;font-weight:normal;">OPM-</div><div class="a" style="left:25.00px;top:87.34px;width:26.20px;height:6.00px;background:#c8c8c8;"></div><div class="t" style="left:11.80px;top:94.14px;line-height:8px;height:8px;font-size:4.85px;color:#666;font-weight:normal;">Errors : 0 | Discards : 81.845 G</div><div class="a" style="left:4.30px;top:104.84px;width:136.50px;height:0.60px;background:#ededed;"></div><div class="t" style="left:11.80px;top:109.98px;line-height:8px;height:8px;font-size:4.75px;color:#111;font-weight:bold;-webkit-text-stroke:0.06px currentColor;">Realtek RTL8139C+ Fast Ethernet NIC #3-WFP Nativ...</div><div class="t" style="left:11.80px;top:117.78px;line-height:8px;height:8px;font-size:4.9px;color:#666;font-weight:normal;">OPM-</div><div class="a" style="left:25.00px;top:118.78px;width:26.20px;height:6.00px;background:#c8c8c8;"></div><div class="t" style="left:11.80px;top:125.58px;line-height:8px;height:8px;font-size:4.85px;color:#666;font-weight:normal;">Errors : 0 | Discards : 81.831 G</div><div class="a" style="left:4.30px;top:136.28px;width:136.50px;height:0.60px;background:#ededed;"></div><div class="t" style="left:11.80px;top:141.42px;line-height:8px;height:8px;font-size:4.75px;color:#111;font-weight:bold;-webkit-text-stroke:0.06px currentColor;">Realtek RTL8139C+ Fast Ethernet NIC #3-WFP 802.3 ...</div><div class="t" style="left:11.80px;top:149.22px;line-height:8px;height:8px;font-size:4.9px;color:#666;font-weight:normal;">OPM-</div><div class="a" style="left:25.00px;top:150.22px;width:26.20px;height:6.00px;background:#c8c8c8;"></div><div class="t" style="left:11.80px;top:157.02px;line-height:8px;height:8px;font-size:4.85px;color:#666;font-weight:normal;">Errors : 0 | Discards : 81.817 G</div><div class="a" style="left:4.30px;top:167.72px;width:136.50px;height:0.60px;background:#ededed;"></div><div class="t" style="left:11.80px;top:172.86px;line-height:8px;height:8px;font-size:4.75px;color:#111;font-weight:bold;-webkit-text-stroke:0.06px currentColor;">Realtek RTL8139C+ Fast Ethernet NIC #3-Ethernet 3</div><div class="t" style="left:11.80px;top:180.66px;line-height:8px;height:8px;font-size:4.9px;color:#666;font-weight:normal;">OPM-</div><div class="a" style="left:25.00px;top:181.66px;width:26.20px;height:6.00px;background:#c8c8c8;"></div><div class="t" style="left:11.80px;top:188.46px;line-height:8px;height:8px;font-size:4.85px;color:#666;font-weight:normal;">Errors : 0 | Discards : 79.405 G</div><div class="a" style="left:4.30px;top:199.16px;width:136.50px;height:0.60px;background:#ededed;"></div><div class="t" style="left:11.80px;top:204.30px;line-height:8px;height:8px;font-size:4.75px;color:#111;font-weight:bold;-webkit-text-stroke:0.06px currentColor;">Realtek RTL8139C+ Fast Ethernet NIC #4-Ethernet 4</div><div class="t" style="left:11.80px;top:212.10px;line-height:8px;height:8px;font-size:4.9px;color:#666;font-weight:normal;">OPM-</div><div class="a" style="left:25.00px;top:213.10px;width:26.20px;height:6.00px;background:#c8c8c8;"></div><div class="a" style="left:4.30px;top:230.60px;width:136.50px;height:0.60px;background:#ededed;"></div></div>
<div class="p" style="left:300.1px;top:53.6px;height:390px"><div class="hb"><div class="ht">Infrastructure Snapshot</div></div><div class="a" style="left:3.80px;top:28.20px;width:136.10px;height:20.40px;background:#fafafa;"></div><div class="t" style="left:8.70px;top:31.40px;line-height:8px;height:8px;font-size:4px;color:#bbb;font-weight:normal;">-</div><div class="t" style="left:18.20px;top:31.00px;line-height:8px;height:8px;font-size:5.2px;color:#222;font-weight:normal;">Name</div><div class="t" style="left:49.90px;top:31.00px;line-height:8px;height:8px;font-size:5.2px;color:#222;font-weight:normal;">Alar</div><div class="t" style="left:49.90px;top:37.70px;line-height:8px;height:8px;font-size:5.2px;color:#222;font-weight:normal;">ms</div><div class="t" style="left:70.70px;top:31.00px;line-height:8px;height:8px;font-size:5.2px;color:#222;font-weight:normal;">Devi</div><div class="t" style="left:70.70px;top:37.70px;line-height:8px;height:8px;font-size:5.2px;color:#222;font-weight:normal;">ces</div><div class="t" style="left:91.80px;top:31.00px;line-height:8px;height:8px;font-size:5.2px;color:#222;font-weight:normal;">Problematic</div><div class="t" style="left:91.80px;top:37.70px;line-height:8px;height:8px;font-size:5.2px;color:#222;font-weight:normal;">Devices</div><svg class="a" style="left:7.70px;top:53.30px" width="7" height="7" viewBox="0 0 7 7"><circle cx="3.5" cy="3.5" r="3.5" fill="#e45b55"/><path d="M2.2,2.2L4.8,4.8M4.8,2.2L2.2,4.8" stroke="#fff" stroke-width="0.9"/></svg><div class="t" style="left:18.10px;top:53.87px;line-height:7.25px;height:auto;font-size:5.1px;color:#222">Server</div><div class="t" style="left:49.50px;top:52.80px;line-height:8px;height:8px;font-size:5.1px;color:#222;font-weight:normal;">215</div><div class="t" style="left:70.60px;top:52.80px;line-height:8px;height:8px;font-size:5.1px;color:#222;font-weight:normal;">20</div><div class="t" style="left:91.90px;top:52.80px;line-height:8px;height:8px;font-size:5.1px;color:#222;font-weight:normal;">7</div><div class="a" style="left:3.60px;top:64.20px;width:136.30px;height:0.60px;background:#ededed;"></div><svg class="a" style="left:7.70px;top:69.05px" width="7" height="7" viewBox="0 0 7 7"><circle cx="3.5" cy="3.5" r="3.5" fill="#e45b55"/><path d="M2.2,2.2L4.8,4.8M4.8,2.2L2.2,4.8" stroke="#fff" stroke-width="0.9"/></svg><div class="t" style="left:18.10px;top:69.63px;line-height:7.25px;height:auto;font-size:5.1px;color:#222">Router</div><div class="t" style="left:49.50px;top:68.55px;line-height:8px;height:8px;font-size:5.1px;color:#222;font-weight:normal;">2</div><div class="t" style="left:70.60px;top:68.55px;line-height:8px;height:8px;font-size:5.1px;color:#222;font-weight:normal;">2</div><div class="t" style="left:91.90px;top:68.55px;line-height:8px;height:8px;font-size:5.1px;color:#222;font-weight:normal;">2</div><div class="a" style="left:3.60px;top:80.10px;width:136.30px;height:0.60px;background:#ededed;"></div><svg class="a" style="left:7.70px;top:84.85px" width="7" height="7" viewBox="0 0 7 7"><circle cx="3.5" cy="3.5" r="3.5" fill="#e45b55"/><path d="M2.2,2.2L4.8,4.8M4.8,2.2L2.2,4.8" stroke="#fff" stroke-width="0.9"/></svg><div class="t" style="left:18.10px;top:85.43px;line-height:7.25px;height:auto;font-size:5.1px;color:#222">Switch</div><div class="t" style="left:49.50px;top:84.35px;line-height:8px;height:8px;font-size:5.1px;color:#222;font-weight:normal;">1</div><div class="t" style="left:70.60px;top:84.35px;line-height:8px;height:8px;font-size:5.1px;color:#222;font-weight:normal;">2</div><div class="t" style="left:91.90px;top:84.35px;line-height:8px;height:8px;font-size:5.1px;color:#222;font-weight:normal;">1</div><div class="a" style="left:3.60px;top:95.80px;width:136.30px;height:0.60px;background:#ededed;"></div><svg class="a" style="left:7.70px;top:100.60px" width="7" height="7" viewBox="0 0 7 7"><circle cx="3.5" cy="3.5" r="3.5" fill="#eea35a"/><path d="M2.8,2.2V4.8M4.2,2.2V4.8" stroke="#fff" stroke-width="0.7"/></svg><div class="t" style="left:18.10px;top:101.18px;line-height:7.25px;height:auto;font-size:5.1px;color:#222">Desktop</div><div class="t" style="left:49.50px;top:100.10px;line-height:8px;height:8px;font-size:5.1px;color:#222;font-weight:normal;">8</div><div class="t" style="left:70.60px;top:100.10px;line-height:8px;height:8px;font-size:5.1px;color:#222;font-weight:normal;">3</div><div class="t" style="left:91.90px;top:100.10px;line-height:8px;height:8px;font-size:5.1px;color:#222;font-weight:normal;">2</div><div class="a" style="left:3.60px;top:111.60px;width:136.30px;height:0.60px;background:#ededed;"></div><svg class="a" style="left:7.70px;top:116.35px" width="7" height="7" viewBox="0 0 7 7"><circle cx="3.5" cy="3.5" r="3.5" fill="#4fae6c"/><path d="M1.9,3.6L3.0,4.7L5.1,2.5" stroke="#fff" stroke-width="0.9" fill="none"/></svg><div class="t" style="left:18.10px;top:116.93px;line-height:7.25px;height:auto;font-size:5.1px;color:#222">Firewall</div><div class="t" style="left:49.50px;top:115.85px;line-height:8px;height:8px;font-size:5.1px;color:#222;font-weight:normal;">0</div><div class="t" style="left:70.60px;top:115.85px;line-height:8px;height:8px;font-size:5.1px;color:#222;font-weight:normal;">0</div><div class="t" style="left:91.90px;top:115.85px;line-height:8px;height:8px;font-size:5.1px;color:#222;font-weight:normal;">0</div><div class="a" style="left:3.60px;top:127.30px;width:136.30px;height:0.60px;background:#ededed;"></div><svg class="a" style="left:7.70px;top:135.65px" width="7" height="7" viewBox="0 0 7 7"><circle cx="3.5" cy="3.5" r="3.5" fill="#e45b55"/><path d="M2.2,2.2L4.8,4.8M4.8,2.2L2.2,4.8" stroke="#fff" stroke-width="0.9"/></svg><div class="t" style="left:18.10px;top:132.60px;line-height:7.25px;height:auto;font-size:5.1px;color:#222">DomainCo<br>ntroller</div><div class="t" style="left:49.50px;top:135.15px;line-height:8px;height:8px;font-size:5.1px;color:#222;font-weight:normal;">49</div><div class="t" style="left:70.60px;top:135.15px;line-height:8px;height:8px;font-size:5.1px;color:#222;font-weight:normal;">2</div><div class="t" style="left:91.90px;top:135.15px;line-height:8px;height:8px;font-size:5.1px;color:#222;font-weight:normal;">2</div><div class="a" style="left:3.60px;top:150.20px;width:136.30px;height:0.60px;background:#ededed;"></div><svg class="a" style="left:7.70px;top:158.55px" width="7" height="7" viewBox="0 0 7 7"><circle cx="3.5" cy="3.5" r="3.5" fill="#4fae6c"/><path d="M1.9,3.6L3.0,4.7L5.1,2.5" stroke="#fff" stroke-width="0.9" fill="none"/></svg><div class="t" style="left:18.10px;top:155.50px;line-height:7.25px;height:auto;font-size:5.1px;color:#222">Load<br>Balancer</div><div class="t" style="left:49.50px;top:158.05px;line-height:8px;height:8px;font-size:5.1px;color:#222;font-weight:normal;">0</div><div class="t" style="left:70.60px;top:158.05px;line-height:8px;height:8px;font-size:5.1px;color:#222;font-weight:normal;">0</div><div class="t" style="left:91.90px;top:158.05px;line-height:8px;height:8px;font-size:5.1px;color:#222;font-weight:normal;">0</div><div class="a" style="left:3.60px;top:173.10px;width:136.30px;height:0.60px;background:#ededed;"></div><svg class="a" style="left:7.70px;top:185.45px" width="7" height="7" viewBox="0 0 7 7"><circle cx="3.5" cy="3.5" r="3.5" fill="#4fae6c"/><path d="M1.9,3.6L3.0,4.7L5.1,2.5" stroke="#fff" stroke-width="0.9" fill="none"/></svg><div class="t" style="left:18.10px;top:178.78px;line-height:7.25px;height:auto;font-size:5.1px;color:#222">WAN<br>Accelerat<br>or</div><div class="t" style="left:49.50px;top:184.95px;line-height:8px;height:8px;font-size:5.1px;color:#222;font-weight:normal;">0</div><div class="t" style="left:70.60px;top:184.95px;line-height:8px;height:8px;font-size:5.1px;color:#222;font-weight:normal;">0</div><div class="t" style="left:91.90px;top:184.95px;line-height:8px;height:8px;font-size:5.1px;color:#222;font-weight:normal;">0</div><div class="a" style="left:3.60px;top:204.00px;width:136.30px;height:0.60px;background:#ededed;"></div><svg class="a" style="left:7.70px;top:208.80px" width="7" height="7" viewBox="0 0 7 7"><circle cx="3.5" cy="3.5" r="3.5" fill="#4fae6c"/><path d="M1.9,3.6L3.0,4.7L5.1,2.5" stroke="#fff" stroke-width="0.9" fill="none"/></svg><div class="t" style="left:18.10px;top:209.38px;line-height:7.25px;height:auto;font-size:5.1px;color:#222">Wireless</div><div class="t" style="left:49.50px;top:208.30px;line-height:8px;height:8px;font-size:5.1px;color:#222;font-weight:normal;">0</div><div class="t" style="left:70.60px;top:208.30px;line-height:8px;height:8px;font-size:5.1px;color:#222;font-weight:normal;">0</div><div class="t" style="left:91.90px;top:208.30px;line-height:8px;height:8px;font-size:5.1px;color:#222;font-weight:normal;">0</div><div class="a" style="left:3.60px;top:219.80px;width:136.30px;height:0.60px;background:#ededed;"></div><svg class="a" style="left:7.70px;top:224.70px" width="7" height="7" viewBox="0 0 7 7"><circle cx="3.5" cy="3.5" r="3.5" fill="#4fae6c"/><path d="M1.9,3.6L3.0,4.7L5.1,2.5" stroke="#fff" stroke-width="0.9" fill="none"/></svg><div class="t" style="left:18.10px;top:225.28px;line-height:7.25px;height:auto;font-size:5.1px;color:#222">UPS</div><div class="t" style="left:49.50px;top:224.20px;line-height:8px;height:8px;font-size:5.1px;color:#222;font-weight:normal;">0</div><div class="t" style="left:70.60px;top:224.20px;line-height:8px;height:8px;font-size:5.1px;color:#222;font-weight:normal;">0</div><div class="t" style="left:91.90px;top:224.20px;line-height:8px;height:8px;font-size:5.1px;color:#222;font-weight:normal;">0</div><div class="a" style="left:3.60px;top:235.80px;width:136.30px;height:0.60px;background:#ededed;"></div><svg class="a" style="left:7.70px;top:240.70px" width="7" height="7" viewBox="0 0 7 7"><circle cx="3.5" cy="3.5" r="3.5" fill="#4fae6c"/><path d="M1.9,3.6L3.0,4.7L5.1,2.5" stroke="#fff" stroke-width="0.9" fill="none"/></svg><div class="t" style="left:18.10px;top:241.28px;line-height:7.25px;height:auto;font-size:5.1px;color:#222">Printer</div><div class="t" style="left:49.50px;top:240.20px;line-height:8px;height:8px;font-size:5.1px;color:#222;font-weight:normal;">0</div><div class="t" style="left:70.60px;top:240.20px;line-height:8px;height:8px;font-size:5.1px;color:#222;font-weight:normal;">1</div><div class="t" style="left:91.90px;top:240.20px;line-height:8px;height:8px;font-size:5.1px;color:#222;font-weight:normal;">0</div><div class="a" style="left:3.60px;top:251.80px;width:136.30px;height:0.60px;background:#ededed;"></div><svg class="a" style="left:7.70px;top:256.60px" width="7" height="7" viewBox="0 0 7 7"><circle cx="3.5" cy="3.5" r="3.5" fill="#4fae6c"/><path d="M1.9,3.6L3.0,4.7L5.1,2.5" stroke="#fff" stroke-width="0.9" fill="none"/></svg><div class="t" style="left:18.10px;top:257.17px;line-height:7.25px;height:auto;font-size:5.1px;color:#222">Unknown</div><div class="t" style="left:49.50px;top:256.10px;line-height:8px;height:8px;font-size:5.1px;color:#222;font-weight:normal;">0</div><div class="t" style="left:70.60px;top:256.10px;line-height:8px;height:8px;font-size:5.1px;color:#222;font-weight:normal;">3</div><div class="t" style="left:91.90px;top:256.10px;line-height:8px;height:8px;font-size:5.1px;color:#222;font-weight:normal;">0</div><div class="a" style="left:3.60px;top:267.60px;width:136.30px;height:0.60px;background:#ededed;"></div><svg class="a" style="left:7.70px;top:272.50px" width="7" height="7" viewBox="0 0 7 7"><circle cx="3.5" cy="3.5" r="3.5" fill="#4fae6c"/><path d="M1.9,3.6L3.0,4.7L5.1,2.5" stroke="#fff" stroke-width="0.9" fill="none"/></svg><div class="t" style="left:18.10px;top:273.07px;line-height:7.25px;height:auto;font-size:5.1px;color:#222">Storage</div><div class="t" style="left:49.50px;top:272.00px;line-height:8px;height:8px;font-size:5.1px;color:#222;font-weight:normal;">0</div><div class="t" style="left:70.60px;top:272.00px;line-height:8px;height:8px;font-size:5.1px;color:#222;font-weight:normal;">0</div><div class="t" style="left:91.90px;top:272.00px;line-height:8px;height:8px;font-size:5.1px;color:#222;font-weight:normal;">0</div><div class="a" style="left:3.60px;top:283.60px;width:136.30px;height:0.60px;background:#ededed;"></div><svg class="a" style="left:7.70px;top:288.55px" width="7" height="7" viewBox="0 0 7 7"><circle cx="3.5" cy="3.5" r="3.5" fill="#4fae6c"/><path d="M1.9,3.6L3.0,4.7L5.1,2.5" stroke="#fff" stroke-width="0.9" fill="none"/></svg><div class="t" style="left:18.10px;top:289.12px;line-height:7.25px;height:auto;font-size:5.1px;color:#222">PDU</div><div class="t" style="left:49.50px;top:288.05px;line-height:8px;height:8px;font-size:5.1px;color:#222;font-weight:normal;">0</div><div class="t" style="left:70.60px;top:288.05px;line-height:8px;height:8px;font-size:5.1px;color:#222;font-weight:normal;">0</div><div class="t" style="left:91.90px;top:288.05px;line-height:8px;height:8px;font-size:5.1px;color:#222;font-weight:normal;">0</div><div class="a" style="left:3.60px;top:299.70px;width:136.30px;height:0.60px;background:#ededed;"></div><svg class="a" style="left:7.70px;top:304.60px" width="7" height="7" viewBox="0 0 7 7"><circle cx="3.5" cy="3.5" r="3.5" fill="#4fae6c"/><path d="M1.9,3.6L3.0,4.7L5.1,2.5" stroke="#fff" stroke-width="0.9" fill="none"/></svg><div class="t" style="left:18.10px;top:305.17px;line-height:7.25px;height:auto;font-size:5.1px;color:#222">UCS</div><div class="t" style="left:49.50px;top:304.10px;line-height:8px;height:8px;font-size:5.1px;color:#222;font-weight:normal;">0</div><div class="t" style="left:70.60px;top:304.10px;line-height:8px;height:8px;font-size:5.1px;color:#222;font-weight:normal;">0</div><div class="t" style="left:91.90px;top:304.10px;line-height:8px;height:8px;font-size:5.1px;color:#222;font-weight:normal;">0</div><div class="a" style="left:3.60px;top:315.70px;width:136.30px;height:0.60px;background:#ededed;"></div><svg class="a" style="left:7.70px;top:320.60px" width="7" height="7" viewBox="0 0 7 7"><circle cx="3.5" cy="3.5" r="3.5" fill="#4fae6c"/><path d="M1.9,3.6L3.0,4.7L5.1,2.5" stroke="#fff" stroke-width="0.9" fill="none"/></svg><div class="t" style="left:18.10px;top:321.17px;line-height:7.25px;height:auto;font-size:5.1px;color:#222">RAID</div><div class="t" style="left:49.50px;top:320.10px;line-height:8px;height:8px;font-size:5.1px;color:#222;font-weight:normal;">0</div><div class="t" style="left:70.60px;top:320.10px;line-height:8px;height:8px;font-size:5.1px;color:#222;font-weight:normal;">0</div><div class="t" style="left:91.90px;top:320.10px;line-height:8px;height:8px;font-size:5.1px;color:#222;font-weight:normal;">0</div><div class="a" style="left:3.60px;top:331.70px;width:136.30px;height:0.60px;background:#ededed;"></div><svg class="a" style="left:7.70px;top:336.15px" width="7" height="7" viewBox="0 0 7 7"><circle cx="3.5" cy="3.5" r="3.5" fill="#4fae6c"/><path d="M1.9,3.6L3.0,4.7L5.1,2.5" stroke="#fff" stroke-width="0.9" fill="none"/></svg><div class="t" style="left:18.10px;top:336.72px;line-height:7.25px;height:auto;font-size:5.1px;color:#222">FCSwitch</div><div class="t" style="left:49.50px;top:335.65px;line-height:8px;height:8px;font-size:5.1px;color:#222;font-weight:normal;">0</div><div class="t" style="left:70.60px;top:335.65px;line-height:8px;height:8px;font-size:5.1px;color:#222;font-weight:normal;">0</div><div class="t" style="left:91.90px;top:335.65px;line-height:8px;height:8px;font-size:5.1px;color:#222;font-weight:normal;">0</div><div class="a" style="left:3.60px;top:346.80px;width:136.30px;height:0.60px;background:#ededed;"></div><svg class="a" style="left:7.70px;top:355.35px" width="7" height="7" viewBox="0 0 7 7"><circle cx="3.5" cy="3.5" r="3.5" fill="#4fae6c"/><path d="M1.9,3.6L3.0,4.7L5.1,2.5" stroke="#fff" stroke-width="0.9" fill="none"/></svg><div class="t" style="left:18.10px;top:352.30px;line-height:7.25px;height:auto;font-size:5.1px;color:#222">TapeLibrar<br>y</div><div class="t" style="left:49.50px;top:354.85px;line-height:8px;height:8px;font-size:5.1px;color:#222;font-weight:normal;">0</div><div class="t" style="left:70.60px;top:354.85px;line-height:8px;height:8px;font-size:5.1px;color:#222;font-weight:normal;">0</div><div class="t" style="left:91.90px;top:354.85px;line-height:8px;height:8px;font-size:5.1px;color:#222;font-weight:normal;">0</div><div class="a" style="left:3.60px;top:370.10px;width:136.30px;height:0.60px;background:#ededed;"></div><svg class="a" style="left:7.70px;top:374.95px" width="7" height="7" viewBox="0 0 7 7"><circle cx="3.5" cy="3.5" r="3.5" fill="#4fae6c"/><path d="M1.9,3.6L3.0,4.7L5.1,2.5" stroke="#fff" stroke-width="0.9" fill="none"/></svg><div class="t" style="left:18.10px;top:375.52px;line-height:7.25px;height:auto;font-size:5.1px;color:#222">URLs</div><div class="t" style="left:49.50px;top:374.45px;line-height:8px;height:8px;font-size:5.1px;color:#222;font-weight:normal;">0</div><div class="t" style="left:70.60px;top:374.45px;line-height:8px;height:8px;font-size:5.1px;color:#222;font-weight:normal;">0</div><div class="t" style="left:91.90px;top:374.45px;line-height:8px;height:8px;font-size:5.1px;color:#222;font-weight:normal;">0</div><div class="a" style="left:3.60px;top:386.00px;width:136.30px;height:0.60px;background:#ededed;"></div></div>
<div class="p" style="left:597.9px;top:53.6px;height:390px"><div class="hb"><div class="ht">Recent Alarms</div></div><svg class="a" style="left:0;top:0" width="145" height="200" viewBox="0 0 145 200"><path d="M40.92,127.55A48.5,48.5 0 1 1 72.10,138.90L72.10,126.00A35.6,35.6 0 1 0 49.22,117.67Z" fill="#e8675f"/><path d="M72.10,138.90A48.5,48.5 0 0 1 40.92,127.55L49.22,117.67A35.6,35.6 0 0 0 72.10,126.00Z" fill="#e6dc6c"/><g transform="translate(72.00,58.40)" stroke="#1a1a1a" stroke-width="1.15" fill="none" stroke-linecap="round"><path d="M0,7.5V8.6"/><path d="M-4.9,20H4.9L3.9,18.6V12.7A3.9,3.9 0 0 0 -3.9,12.7V18.6Z" stroke-linejoin="round"/><path d="M-1.1,21.3A1.1,1.1 0 0 0 1.1,21.3" fill="#222"/><path d="M-6.5,6.6L-4.6,8.6M6.5,6.6L4.6,8.6M-9.1,11.1L-6.4,12M9.1,11.1L6.4,12M-9.1,16.1L-6.4,15.2M9.1,16.1L6.4,15.2"/></g></svg><div class="t" style="left:57.10px;width:30px;text-align:center;top:83.30px;line-height:14px;height:14px;font-size:13.6px;color:#111;-webkit-text-stroke:0.15px #111">10</div><div class="t" style="left:57.10px;width:30px;text-align:center;top:99.40px;font-size:6.9px;color:#222;-webkit-text-stroke:0.15px #222">Alarm</div><div class="a" style="left:3.70px;top:161.40px;width:136.30px;height:13.80px;background:#f8f8f8;"></div><div class="t" style="left:6.40px;top:164.70px;line-height:8px;height:8px;font-size:5.3px;color:#1a1a1a;font-weight:normal;-webkit-text-stroke:0.12px #1a1a1a">Device Name</div><div class="t" style="left:40.60px;top:164.60px;line-height:8px;height:8px;font-size:4px;color:#aaa;font-weight:normal;">-</div><div class="a" style="left:7.70px;top:179.20px;width:1.30px;height:23.40px;background:#de8983;"></div><div class="t" style="left:11.40px;top:180.50px;line-height:8px;height:8px;font-size:4.77px;color:#111;font-weight:bold;-webkit-text-stroke:0.06px currentColor;">ID=2004 Source=Microsoft-Windows-Resource-Exha...</div><div class="t" style="left:11.40px;top:188.20px;line-height:8px;height:8px;font-size:4.9px;color:#777;font-weight:normal;">Opm</div><div class="a" style="left:22.90px;top:189.30px;width:33.80px;height:5.50px;background:#c8c8c8;"></div><div class="t" style="left:11.40px;top:195.90px;line-height:8px;height:8px;font-size:4.9px;color:#555;font-weight:normal;">21 Feb 2019 04:57:02 PM IST</div><div class="a" style="left:3.70px;top:206.60px;width:136.30px;height:0.60px;background:#ededed;"></div><div class="a" style="left:7.70px;top:210.75px;width:1.30px;height:23.40px;background:#de8983;"></div><div class="t" style="left:11.40px;top:212.05px;line-height:8px;height:8px;font-size:4.77px;color:#111;font-weight:bold;-webkit-text-stroke:0.06px currentColor;">ID=4625 Source=Microsoft-Windows-Security-Auditi...</div><div class="t" style="left:11.40px;top:219.75px;line-height:8px;height:8px;font-size:4.9px;color:#777;font-weight:normal;">Opm</div><div class="a" style="left:22.90px;top:220.85px;width:33.80px;height:5.50px;background:#c8c8c8;"></div><div class="t" style="left:11.40px;top:227.45px;line-height:8px;height:8px;font-size:4.9px;color:#555;font-weight:normal;">21 Feb 2019 04:56:34 PM IST</div><div class="a" style="left:3.70px;top:238.15px;width:136.30px;height:0.60px;background:#ededed;"></div><div class="a" style="left:7.70px;top:242.30px;width:1.30px;height:23.40px;background:#de8983;"></div><div class="t" style="left:11.40px;top:243.60px;line-height:8px;height:8px;font-size:4.77px;color:#111;font-weight:bold;-webkit-text-stroke:0.06px currentColor;">ID=1014 Source=Microsoft-Windows-DNS-Client Typ...</div><div class="t" style="left:11.40px;top:251.30px;line-height:8px;height:8px;font-size:4.9px;color:#777;font-weight:normal;">Opm</div><div class="a" style="left:22.90px;top:252.40px;width:33.80px;height:5.50px;background:#c8c8c8;"></div><div class="t" style="left:11.40px;top:259.00px;line-height:8px;height:8px;font-size:4.9px;color:#555;font-weight:normal;">21 Feb 2019 04:55:58 PM IST</div><div class="a" style="left:3.70px;top:269.70px;width:136.30px;height:0.60px;background:#ededed;"></div><div class="a" style="left:7.70px;top:273.85px;width:1.30px;height:23.40px;background:#de8983;"></div><div class="t" style="left:11.40px;top:275.15px;line-height:8px;height:8px;font-size:4.77px;color:#111;font-weight:bold;-webkit-text-stroke:0.06px currentColor;">ID=6002 Source=MSExchange Mid-Tier Storage Type=...</div><div class="t" style="left:11.40px;top:282.85px;line-height:8px;height:8px;font-size:4.9px;color:#777;font-weight:normal;">Opm</div><div class="a" style="left:22.90px;top:283.95px;width:33.80px;height:5.50px;background:#c8c8c8;"></div><div class="t" style="left:11.40px;top:290.55px;line-height:8px;height:8px;font-size:4.9px;color:#555;font-weight:normal;">21 Feb 2019 04:52:49 PM IST</div><div class="a" style="left:3.70px;top:301.25px;width:136.30px;height:0.60px;background:#ededed;"></div><div class="a" style="left:7.70px;top:305.40px;width:1.30px;height:23.40px;background:#e9df8c;"></div><div class="t" style="left:11.40px;top:306.70px;line-height:8px;height:8px;font-size:4.77px;color:#111;font-weight:bold;-webkit-text-stroke:0.06px currentColor;">ID=700 Source=NTDS ISAM Type=3 Message=NTDS (...</div><div class="t" style="left:11.40px;top:314.40px;line-height:8px;height:8px;font-size:4.9px;color:#777;font-weight:normal;">Opm</div><div class="a" style="left:22.90px;top:315.50px;width:33.80px;height:5.50px;background:#c8c8c8;"></div><div class="t" style="left:11.40px;top:322.10px;line-height:8px;height:8px;font-size:4.9px;color:#555;font-weight:normal;">21 Feb 2019 04:43:34 PM IST</div><div class="a" style="left:3.70px;top:332.80px;width:136.30px;height:0.60px;background:#ededed;"></div><div class="a" style="left:7.70px;top:336.95px;width:1.30px;height:23.40px;background:#de8983;"></div><div class="t" style="left:11.40px;top:338.25px;line-height:8px;height:8px;font-size:4.58px;color:#111;font-weight:bold;-webkit-text-stroke:0.06px currentColor;">APM Plugin: Health is critical as the resource is not ava...</div><div class="t" style="left:11.40px;top:345.95px;line-height:8px;height:8px;font-size:4.9px;color:#777;font-weight:normal;">HP C</div><div class="a" style="left:22.90px;top:347.05px;width:33.80px;height:5.50px;background:#c8c8c8;"></div><div class="t" style="left:11.40px;top:353.65px;line-height:8px;height:8px;font-size:4.9px;color:#555;font-weight:normal;">21 Feb 2019 04:35:11 PM IST</div><div class="a" style="left:3.70px;top:364.35px;width:136.30px;height:0.60px;background:#ededed;"></div><div class="a" style="left:7.70px;top:368.50px;width:1.30px;height:23.40px;background:#de8983;"></div><div class="t" style="left:11.40px;top:369.80px;line-height:8px;height:8px;font-size:4.77px;color:#111;font-weight:bold;-webkit-text-stroke:0.06px currentColor;">ID=1010 Source=MSExchangeFastSearch Type=...</div><div class="t" style="left:11.40px;top:377.50px;line-height:8px;height:8px;font-size:4.9px;color:#777;font-weight:normal;">Opm</div><div class="a" style="left:22.90px;top:378.60px;width:33.80px;height:5.50px;background:#c8c8c8;"></div><div class="a" style="left:3.70px;top:395.90px;width:136.30px;height:0.60px;background:#ededed;"></div></div>
<div class="a" style="left:688.10px;top:418.20px;width:21.00px;height:17.00px;background:#262626;border-top:0.8px solid #0e0e0e"></div>
<div class="t" style="left:688.10px;top:421.70px;line-height:8px;height:8px;font-size:7.9px;color:#cfcfcf;font-weight:normal;width:21px;text-align:center;letter-spacing:-0.2px">286</div>
<div class="t" style="left:688.10px;top:428.60px;line-height:8px;height:8px;font-size:4.6px;color:#8a8a8a;font-weight:normal;width:21px;text-align:center">Alarms</div>
<div class="a" style="left:717.10px;top:418.20px;width:21.00px;height:17.00px;background:#62b67c;"></div>
<svg class="a" style="left:717.1px;top:418.2px" width="21" height="17" viewBox="0 0 21 17" fill="none" stroke="#fff" stroke-width="0.55"><path d="M6.3,5.6V4.8Q6.3,3.6 7.6,3.6H14.3Q15.6,3.6 15.6,4.8V8.1Q15.6,9.3 14.3,9.3H14.0"/><path d="M5.2,6.2H12.6Q13.9,6.2 13.9,7.4V10.6Q13.9,11.8 12.6,11.8H8.4L6.6,13.4V11.8H5.2Q3.9,11.8 3.9,10.6V7.4Q3.9,6.2 5.2,6.2Z"/><path d="M6.8,9.0H11.0" stroke-width="0.8" opacity="0.7"/></svg>
<svg class="a" style="left:700px;top:32.5px" width="46" height="18" viewBox="700 32.5 46 18"><path d="M716.8,37.9L717.9,40.2L720.4,40.4L718.5,42.0L719.1,44.5L716.8,43.2L714.5,44.5L715.1,42.0L713.2,40.4L715.7,40.2Z" fill="#aaa"/><path d="M733.0,38.9H740.6" stroke="#b5dfc1" stroke-width="1.0"/><path d="M732.6,41.4H738.4M732.6,43.6H737.4" stroke="#f4fbf6" stroke-width="0.8"/><circle cx="740.3" cy="44.1" r="2.9" fill="#fff"/><path d="M740.3,42.8V45.4M739.0,44.1H741.6" stroke="#9fd2ae" stroke-width="0.6"/></svg>
</div></body></html>
